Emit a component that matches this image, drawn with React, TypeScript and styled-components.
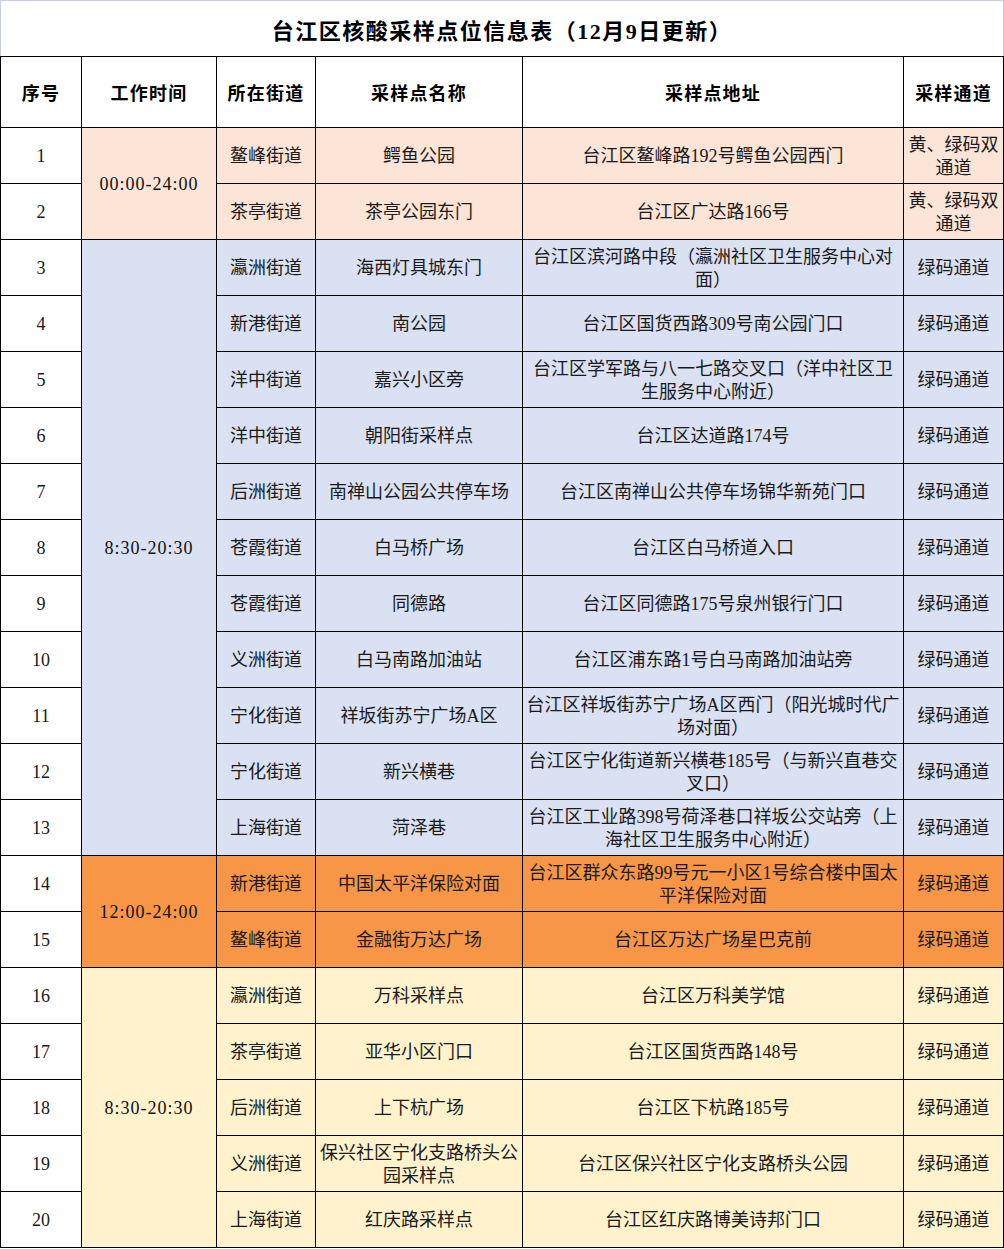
import React from "react";
import styled, { createGlobalStyle } from "styled-components";

const GlobalStyle = createGlobalStyle`
  html, body {
    margin: 0;
    padding: 0;
    background: #ffffff;
  }
  body {
    font-family: "Liberation Serif", "Noto Sans CJK SC", serif;
    color: #1a1a1a;
  }
`;

const colors = {
  peach: "#fce4d6",
  blue: "#d9e1f2",
  orange: "#f79646",
  yellow: "#fff2cc",
  white: "#ffffff",
};

type Tone = keyof typeof colors;

const Sheet = styled.table`
  width: 1003px;
  border-collapse: collapse;
  table-layout: fixed;
`;

const TitleCell = styled.th`
  height: 55px;
  padding: 0;
  border: 1px solid #c6cede;
  border-bottom: 1px solid #000;
  font-size: 22px;
  font-weight: bold;
  color: #000;
  text-align: center;
  vertical-align: middle;
  letter-spacing: 1.5px;
`;

const HeadCell = styled.th`
  height: 70px;
  padding: 0;
  border: 1px solid #000;
  font-size: 18px;
  font-weight: bold;
  color: #000;
  text-align: center;
  vertical-align: middle;
  letter-spacing: 1.2px;
`;

const Cell = styled.td<{ $tone?: Tone }>`
  height: 53px;
  padding: 2px 0 0;
  border: 1px solid #000;
  background: ${(p) => colors[p.$tone ?? "white"]};
  font-size: 18px;
  line-height: 23px;
  text-align: center;
  vertical-align: middle;
  white-space: pre;
  overflow: hidden;
`;

const Clock = styled.span`
  font-size: 18px;
  letter-spacing: 1px;
  color: #111;
`;

type Row = {
  street: string;
  name: string;
  addr: string;
  lane: string;
};

type Group = {
  time: string;
  tone: Tone;
  rows: Row[];
};

const GREEN = "绿码通道";
const BOTH = "黄、绿码双\n通道";

const groups: Group[] = [
  {
    time: "00:00-24:00",
    tone: "peach",
    rows: [
      { street: "鳌峰街道", name: "鳄鱼公园", addr: "台江区鳌峰路192号鳄鱼公园西门", lane: BOTH },
      { street: "茶亭街道", name: "茶亭公园东门", addr: "台江区广达路166号", lane: BOTH },
    ],
  },
  {
    time: "8:30-20:30",
    tone: "blue",
    rows: [
      { street: "瀛洲街道", name: "海西灯具城东门", addr: "台江区滨河路中段（瀛洲社区卫生服务中心对\n面）", lane: GREEN },
      { street: "新港街道", name: "南公园", addr: "台江区国货西路309号南公园门口", lane: GREEN },
      { street: "洋中街道", name: "嘉兴小区旁", addr: "台江区学军路与八一七路交叉口（洋中社区卫\n生服务中心附近）", lane: GREEN },
      { street: "洋中街道", name: "朝阳街采样点", addr: "台江区达道路174号", lane: GREEN },
      { street: "后洲街道", name: "南禅山公园公共停车场", addr: "台江区南禅山公共停车场锦华新苑门口", lane: GREEN },
      { street: "苍霞街道", name: "白马桥广场", addr: "台江区白马桥道入口", lane: GREEN },
      { street: "苍霞街道", name: "同德路", addr: "台江区同德路175号泉州银行门口", lane: GREEN },
      { street: "义洲街道", name: "白马南路加油站", addr: "台江区浦东路1号白马南路加油站旁", lane: GREEN },
      { street: "宁化街道", name: "祥坂街苏宁广场A区", addr: "台江区祥坂街苏宁广场A区西门（阳光城时代广\n场对面）", lane: GREEN },
      { street: "宁化街道", name: "新兴横巷", addr: "台江区宁化街道新兴横巷185号（与新兴直巷交\n叉口）", lane: GREEN },
      { street: "上海街道", name: "菏泽巷", addr: "台江区工业路398号荷泽巷口祥坂公交站旁（上\n海社区卫生服务中心附近）", lane: GREEN },
    ],
  },
  {
    time: "12:00-24:00",
    tone: "orange",
    rows: [
      { street: "新港街道", name: "中国太平洋保险对面", addr: "台江区群众东路99号元一小区1号综合楼中国太\n平洋保险对面", lane: GREEN },
      { street: "鳌峰街道", name: "金融街万达广场", addr: "台江区万达广场星巴克前", lane: GREEN },
    ],
  },
  {
    time: "8:30-20:30",
    tone: "yellow",
    rows: [
      { street: "瀛洲街道", name: "万科采样点", addr: "台江区万科美学馆", lane: GREEN },
      { street: "茶亭街道", name: "亚华小区门口", addr: "台江区国货西路148号", lane: GREEN },
      { street: "后洲街道", name: "上下杭广场", addr: "台江区下杭路185号", lane: GREEN },
      { street: "义洲街道", name: "保兴社区宁化支路桥头公\n园采样点", addr: "台江区保兴社区宁化支路桥头公园", lane: GREEN },
      { street: "上海街道", name: "红庆路采样点", addr: "台江区红庆路博美诗邦门口", lane: GREEN },
    ],
  },
];

const widths = [81, 135, 99, 207, 381, 100];
const heads = ["序号", "工作时间", "所在街道", "采样点名称", "采样点地址", "采样通道"];

export default function App() {
  let serial = 0;
  return (
    <>
      <GlobalStyle />
      <Sheet>
        <colgroup>
          {widths.map((w, i) => (
            <col key={i} style={{ width: w }} />
          ))}
        </colgroup>
        <thead>
          <tr>
            <TitleCell colSpan={6}>台江区核酸采样点位信息表（12月9日更新）</TitleCell>
          </tr>
          <tr>
            {heads.map((h) => (
              <HeadCell key={h}>{h}</HeadCell>
            ))}
          </tr>
        </thead>
        <tbody>
          {groups.map((g) =>
            g.rows.map((r, i) => {
              serial += 1;
              return (
                <tr key={serial}>
                  <Cell>{serial}</Cell>
                  {i === 0 && (
                    <Cell $tone={g.tone} rowSpan={g.rows.length}>
                      <Clock>{g.time}</Clock>
                    </Cell>
                  )}
                  <Cell $tone={g.tone}>{r.street}</Cell>
                  <Cell $tone={g.tone}>{r.name}</Cell>
                  <Cell $tone={g.tone}>{r.addr}</Cell>
                  <Cell $tone={g.tone}>{r.lane}</Cell>
                </tr>
              );
            })
          )}
        </tbody>
      </Sheet>
    </>
  );
}
